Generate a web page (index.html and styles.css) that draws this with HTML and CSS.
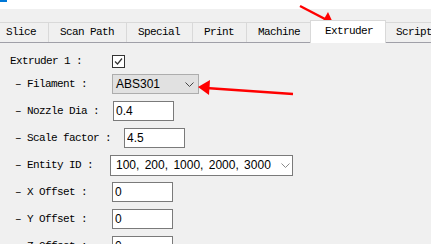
FILE: index.html
```html
<!DOCTYPE html>
<html lang="en">
<head>
    <meta charset="UTF-8">
    <meta name="viewport" content="width=device-width, initial-scale=1.0">
    <title>Extruder settings</title>
    <link rel="stylesheet" href="styles.css">
</head>
<body>
    <div class="titlebar"><span class="app-mark"></span></div>

    <nav class="tabs">
        <div class="tab">Slice</div>
        <div class="tab">Scan Path</div>
        <div class="tab">Special</div>
        <div class="tab">Print</div>
        <div class="tab">Machine</div>
        <div class="tab active">Extruder</div>
        <div class="tab">Script</div>
    </nav>

    <main class="form">
        <div class="row head">
            <span class="label">Extruder 1 :</span>
            <span class="check">
                <svg width="11" height="11" viewBox="0 0 11 11"><polyline points="2,5.5 4.5,8 9,2.5" fill="none" stroke="#333" stroke-width="1.2"/></svg>
            </span>
        </div>
        <div class="row sub">
            <span class="label">– Filament :</span>
            <div class="combo">
                <span>ABS301</span>
                <svg width="9" height="5" viewBox="0 0 9 5"><polyline points="0.5,0.5 4.5,4.5 8.5,0.5" fill="none" stroke="#444" stroke-width="1"/></svg>
            </div>
        </div>
        <div class="row sub">
            <span class="label">– Nozzle Dia :</span>
            <input class="field nudge" type="text" value="0.4">
        </div>
        <div class="row sub">
            <span class="label wide">– Scale factor :</span>
            <input class="field" type="text" value="4.5">
        </div>
        <div class="row sub">
            <span class="label">– Entity ID :</span>
            <div class="combo plain">
                <span class="ids">100, 200, 1000, 2000, 3000</span>
                <svg width="9" height="5" viewBox="0 0 9 5"><polyline points="0.5,0.5 4.5,4.5 8.5,0.5" fill="none" stroke="#8a8a8a" stroke-width="1"/></svg>
            </div>
        </div>
        <div class="row sub">
            <span class="label">– X Offset :</span>
            <input class="field" type="text" value="0">
        </div>
        <div class="row sub">
            <span class="label">– Y Offset :</span>
            <input class="field" type="text" value="0">
        </div>
        <div class="row sub">
            <span class="label">– Z Offset :</span>
            <input class="field" type="text" value="0">
        </div>
    </main>

    <!-- red call-out arrows drawn over the screenshot -->
    <svg class="callouts" width="431" height="244" viewBox="0 0 431 244">
        <line x1="300" y1="6" x2="325" y2="19" stroke="#f00" stroke-width="2.5"/>
        <polygon points="328,12 320,26 334,25" fill="#f00"/>
        <line x1="206" y1="88" x2="293" y2="94" stroke="#f00" stroke-width="2.5"/>
        <polygon points="198,87 210,80 209,95" fill="#f00"/>
    </svg>
</body>
</html>
```

FILE: styles.css
```css
/* Extruder tab of the settings dialog */
body {
    margin: 0;
    background-color: #f0f0f0;
    color: #000;
    font-family: "Liberation Mono", monospace;
    font-size: 11px;
    letter-spacing: -0.6px;
    overflow: hidden;
}

.titlebar {
    height: 9px;
    background-color: #fff;
}

.app-mark {
    display: block;
    width: 7px;
    height: 2px;
    background-color: #0078d7;
}

.tabs {
    display: flex;
    align-items: flex-end;
    height: 22px;
    margin: 11px 0 0 -6px;
    border-bottom: 1px solid #a0a0a8;
    white-space: nowrap;
}

.tab {
    flex: none;
    box-sizing: border-box;
    height: 20px;
    line-height: 19px;
    padding: 0 12px 0 11px;
    border-top: 1px solid #d9d9d9;
    border-left: 1px solid #d9d9d9;
}

.tab.active {
    position: relative;
    z-index: 1;
    height: 23px;
    line-height: 21px;
    margin: 0 -2px -1px;
    padding: 0 12px 0 14px;
    border-right: 1px solid #d9d9d9;
    background-color: #fff;
}

.form {
    padding: 8px 0 0 10px;
}

.row {
    display: flex;
    align-items: center;
    height: 20px;
    margin-bottom: 7px;
}

.row.head {
    margin-bottom: 3px;
}

.label {
    flex: none;
    width: 102px;
    white-space: pre;
}

.sub {
    padding-left: 5px;
}

.sub .label {
    width: 97px;
}

.sub .label.wide {
    width: 109px;
}

.check {
    display: flex;
    align-items: center;
    justify-content: center;
    box-sizing: border-box;
    width: 13px;
    height: 13px;
    border: 1px solid #333;
    background-color: #fff;
}

.field {
    box-sizing: border-box;
    width: 61px;
    height: 20px;
    margin: 0;
    padding: 0 2px;
    border: 1px solid #7a7a7a;
    border-radius: 0;
    background-color: #fff;
    font-family: "Liberation Sans", sans-serif;
    font-size: 12px;
    letter-spacing: 0;
    color: #000;
    outline: none;
}

.field.nudge {
    margin-left: 1px;
}

.combo {
    display: flex;
    align-items: center;
    justify-content: space-between;
    box-sizing: border-box;
    width: 87px;
    height: 20px;
    padding: 0 4px 0 3px;
    border: 1px solid #adadad;
    background-color: #e1e1e1;
    font-family: "Liberation Sans", sans-serif;
    font-size: 12px;
    letter-spacing: 0;
}

.combo.plain {
    width: 183px;
    height: 21px;
    margin-left: -2px;
    padding: 0 2px 0 5px;
    border-color: #7a7a7a;
    background-color: #fff;
}

.ids {
    word-spacing: 2px;
}

.callouts {
    position: absolute;
    top: 0;
    left: 0;
    pointer-events: none;
}
```
